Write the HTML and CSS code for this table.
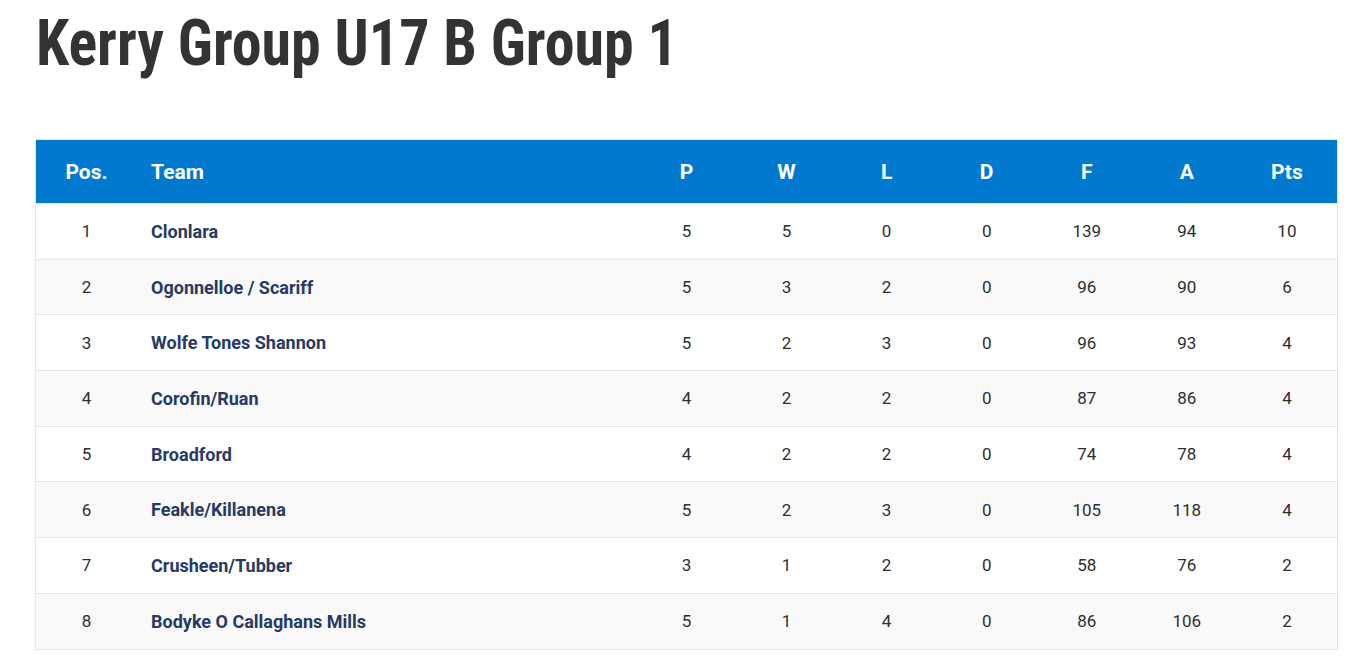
FILE: index.html
```html
<!DOCTYPE html>
<html>
<head>
<meta charset="utf-8">
<link rel="stylesheet" href="styles.css">
</head>
<body>
<div class="page">
  <h1 class="title"><span class="title-text">Kerry Group U17 B Group 1</span></h1>
  <table class="league">
    <thead>
      <tr><th class="pos">Pos.</th><th class="team">Team</th><th>P</th><th>W</th><th>L</th><th>D</th><th>F</th><th>A</th><th>Pts</th></tr>
    </thead>
    <tbody>
      <tr><td class="pos">1</td><td class="team">Clonlara</td><td>5</td><td>5</td><td>0</td><td>0</td><td>139</td><td>94</td><td>10</td></tr>
      <tr><td class="pos">2</td><td class="team">Ogonnelloe / Scariff</td><td>5</td><td>3</td><td>2</td><td>0</td><td>96</td><td>90</td><td>6</td></tr>
      <tr><td class="pos">3</td><td class="team">Wolfe Tones Shannon</td><td>5</td><td>2</td><td>3</td><td>0</td><td>96</td><td>93</td><td>4</td></tr>
      <tr><td class="pos">4</td><td class="team">Corofin/Ruan</td><td>4</td><td>2</td><td>2</td><td>0</td><td>87</td><td>86</td><td>4</td></tr>
      <tr><td class="pos">5</td><td class="team">Broadford</td><td>4</td><td>2</td><td>2</td><td>0</td><td>74</td><td>78</td><td>4</td></tr>
      <tr><td class="pos">6</td><td class="team">Feakle/Killanena</td><td>5</td><td>2</td><td>3</td><td>0</td><td>105</td><td>118</td><td>4</td></tr>
      <tr><td class="pos">7</td><td class="team">Crusheen/Tubber</td><td>3</td><td>1</td><td>2</td><td>0</td><td>58</td><td>76</td><td>2</td></tr>
      <tr><td class="pos">8</td><td class="team">Bodyke O Callaghans Mills</td><td>5</td><td>1</td><td>4</td><td>0</td><td>86</td><td>106</td><td>2</td></tr>
    </tbody>
  </table>
</div>
</body>
</html>
```
FILE: styles.css
```css
html, body {
  margin: 0;
  padding: 0;
  background: #ffffff;
}
.page {
  padding: 0 19px 0 35px;
  font-family: Roboto, "Liberation Sans", sans-serif;
}
.title {
  margin: 0 0 0 1px;
  padding-top: 12px;
  height: 139px;
  box-sizing: border-box;
  font-size: 64px;
  line-height: 1;
  font-weight: 700;
  color: #333333;
  font-stretch: condensed;
  white-space: nowrap;
}
.title-text {
  display: inline-block;
  transform-origin: 0 50%;
  transform: scaleX(0.937);
}
.league {
  width: 1303px;
  border-collapse: collapse;
  border: 1px solid #e6e6e6;
  table-layout: fixed;
}
.league th {
  background: #0079cf;
  color: #ffffff;
  font-size: 21px;
  font-weight: 700;
  height: 63px;
  width: 100px;
  padding: 0;
  text-align: center;
}
.league th.pos {
  width: 101px;
}
.league th.team {
  width: 485px;
  text-align: left;
  padding-left: 14px;
}
.league td {
  height: 55.7px;
  padding: 0;
  box-sizing: border-box;
  text-align: center;
  font-size: 17px;
  color: #2e2e2e;
  border-top: 1px solid #e6e6e6;
}
.league td.team {
  text-align: left;
  padding-left: 14px;
  font-size: 18px;
  font-weight: 700;
  color: #263a63;
}
.league tbody tr:nth-child(even) td {
  background: #f9f9f9;
}
```
